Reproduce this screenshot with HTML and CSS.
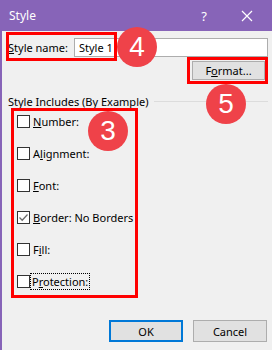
FILE: index.html
```html
<!DOCTYPE html>
<html lang="en">
<head>
    <meta charset="UTF-8">
    <meta name="viewport" content="width=device-width, initial-scale=1.0">
    <title>Style</title>
    <link rel="stylesheet" href="styles.css">
</head>
<body>
    <div class="window">
        <div class="titlebar">
            <span class="title">Style</span>
            <span class="help">?</span>
            <svg class="close" width="12" height="12" viewBox="0 0 12 12">
                <path d="M1 1 L11 11 M11 1 L1 11" stroke="#fff" stroke-width="1.2" fill="none"/>
            </svg>
        </div>

        <div class="content">
            <div class="name-row">
                <label class="name-label"><u>S</u>tyle name:</label>
                <div class="name-input">Style 1</div>
            </div>

            <div class="format-row">
                <button class="btn format-btn">F<u>o</u>rmat...</button>
            </div>

            <div class="group-head">
                <span>Style Includes (By Example)</span>
                <div class="group-line"></div>
            </div>

            <div class="checks">
                <div class="check-row"><span class="box"></span><span><u>N</u>umber:</span></div>
                <div class="check-row"><span class="box"></span><span>A<u>l</u>ignment:</span></div>
                <div class="check-row"><span class="box"></span><span><u>F</u>ont:</span></div>
                <div class="check-row">
                    <span class="box">
                        <svg width="11" height="11" viewBox="0 0 11 11">
                            <path d="M1.5 5.5 L4.2 8.2 L9.5 2.5" stroke="#6d6d6d" stroke-width="1.3" fill="none"/>
                        </svg>
                    </span>
                    <span><u>B</u>order: No Borders</span>
                </div>
                <div class="check-row"><span class="box"></span><span>F<u>i</u>ll:</span></div>
                <div class="check-row"><span class="box"></span><span class="focused">P<u>r</u>otection:</span></div>
            </div>

            <div class="buttons">
                <button class="btn ok-btn">OK</button>
                <button class="btn">Cancel</button>
            </div>
        </div>

        <!-- annotations -->
        <div class="mark mark-name"></div>
        <div class="mark mark-format"></div>
        <div class="mark mark-checks"></div>
        <div class="badge badge-4">4</div>
        <div class="badge badge-5">5</div>
        <div class="badge badge-3">3</div>
    </div>
</body>
</html>
```

FILE: styles.css
```css
body {
    margin: 0;
    padding: 0;
    font-family: 'Noto Sans', 'DejaVu Sans', sans-serif;
    font-size: 11px;
    color: #000;
}

.window {
    position: relative;
    width: 272px;
    height: 350px;
    background: #f0f0f0;
    border-left: 2px solid #8764b8;
    box-sizing: border-box;
    overflow: hidden;
}

.titlebar {
    height: 31px;
    background: #8764b8;
    color: #fff;
    display: flex;
    align-items: center;
    padding-left: 7px;
}

.title {
    flex: 1;
    font-size: 12px;
}

.help {
    font-size: 13px;
    margin-right: 34px;
}

.close {
    margin-right: 19px;
}

.content {
    padding: 7px 4px 0 6px;
}

.name-row {
    display: flex;
    align-items: center;
    height: 19px;
}

.name-label {
    width: 66px;
}

.name-input {
    flex: 1;
    height: 19px;
    box-sizing: border-box;
    border: 1px solid #adadad;
    background: #fff;
    padding-left: 4px;
    line-height: 17px;
}

.format-row {
    display: flex;
    justify-content: flex-end;
    margin-top: 4px;
    padding-right: 3px;
}

.btn {
    font-family: inherit;
    font-size: 11px;
    width: 74px;
    height: 22px;
    background: #e1e1e1;
    border: 1px solid #adadad;
    padding: 0;
    color: #000;
}

.format-btn {
    width: 73px;
    height: 19px;
    line-height: 15px;
}

.group-head {
    display: flex;
    align-items: center;
    margin-top: 13px;
    height: 16px;
}

.group-line {
    flex: 1;
    height: 1px;
    background: #dcdcdc;
    margin-left: 6px;
}

.checks {
    padding-left: 9px;
    margin-top: -4px;
}

.check-row {
    display: flex;
    align-items: center;
    height: 32px;
}

.box {
    width: 13px;
    height: 13px;
    box-sizing: border-box;
    border: 1px solid #333;
    background: #fff;
    margin-right: 3px;
    display: flex;
    align-items: center;
    justify-content: center;
}

.focused {
    outline: 1px dotted #000;
    outline-offset: 0;
    padding: 0 1px;
    margin-left: -2px;
}

.buttons {
    display: flex;
    justify-content: flex-end;
    gap: 10px;
    margin-top: 23px;
    padding-right: 1px;
}

.ok-btn {
    border: 2px solid #0078d7;
}

/* red annotation overlays */
.mark {
    position: absolute;
    border: 3px solid #f00;
    box-sizing: border-box;
}

.mark-name {
    left: 4px;
    top: 32px;
    width: 111px;
    height: 29px;
}

.mark-format {
    left: 185px;
    top: 57px;
    width: 81px;
    height: 27px;
}

.mark-checks {
    left: 9px;
    top: 108px;
    width: 127px;
    height: 190px;
}

.badge {
    position: absolute;
    width: 40px;
    height: 40px;
    border-radius: 50%;
    background: #ef4249;
    color: #fff;
    font-family: 'Liberation Sans', Arial, sans-serif;
    font-size: 28px;
    line-height: 40px;
    text-align: center;
}

.badge-4 {
    left: 115px;
    top: 27px;
}

.badge-5 {
    left: 204px;
    top: 84px;
}

.badge-3 {
    left: 86px;
    top: 111px;
}
```
